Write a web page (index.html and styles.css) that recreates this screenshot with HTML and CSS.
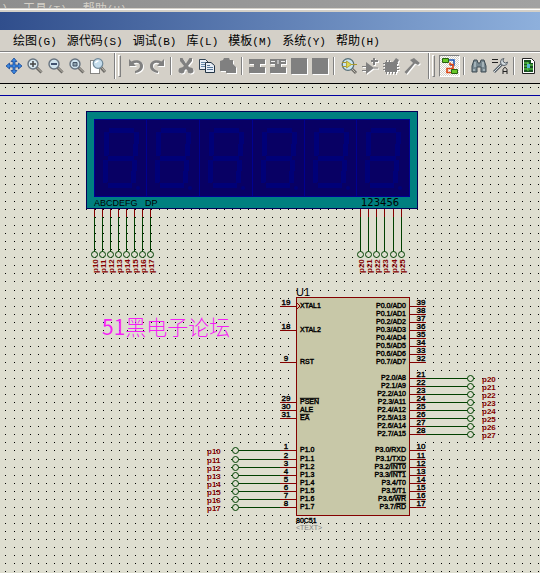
FILE: index.html
```html
<!DOCTYPE html>
<html lang="zh-CN">
  <head>
    <meta charset="UTF-8" />
    <meta name="viewport" content="width=device-width, initial-scale=1.0" />
    <title>51黑电子论坛</title>
    <link rel="stylesheet" href="styles.css">
  </head>
  <body>
    <div class="back-window">
      <span>)</span>
      <span>工具<span class="key">(T)</span></span>
      <span>帮助<span class="key">(H)</span></span>
    </div>

    <div class="window">
      <div class="title-bar"></div>

      <nav class="menu">
        <button>绘图<span class="key">(G)</span></button>
        <button>源代码<span class="key">(S)</span></button>
        <button>调试<span class="key">(B)</span></button>
        <button>库<span class="key">(L)</span></button>
        <button>模板<span class="key">(M)</span></button>
        <button>系统<span class="key">(Y)</span></button>
        <button>帮助<span class="key">(H)</span></button>
      </nav>

      <div class="toolbar">
        <button class="tool" aria-label="Pan">
          <svg viewBox="0 0 16 16"><path d="M8 0l3 3.500H9V7h3.500V5L16 8l-3.500 3V9H9v3.500h2L8 16l-3-3.500h2V9H3.500v2L0 8l3.500-3v2H7V3.500H5z" fill="#3a86e0" stroke="#0c3c8c" stroke-width=".7"/></svg>
        </button>
        <button class="tool" aria-label="Zoom in">
          <svg viewBox="0 0 16 16"><path d="M9.500 9.500l5 5" stroke="#6c6a66" stroke-width="3"/><path d="M10 9.500l4.500 4.500" stroke="#c4c0b4"/><circle cx="6" cy="6" r="5" fill="#d8e8f0" stroke="#687480" stroke-width="1.400"/><path d="M3 6h6M6 3v6" stroke="#444" stroke-width="1.500"/></svg>
        </button>
        <button class="tool" aria-label="Zoom out">
          <svg viewBox="0 0 16 16"><path d="M9.500 9.500l5 5" stroke="#6c6a66" stroke-width="3"/><path d="M10 9.500l4.500 4.500" stroke="#c4c0b4"/><circle cx="6" cy="6" r="5" fill="#d0e4ee" stroke="#687480" stroke-width="1.400"/><path d="M3 6h6" stroke="#124" stroke-width="1.500"/></svg>
        </button>
        <button class="tool" aria-label="Zoom all">
          <svg viewBox="0 0 16 16"><path d="M9.500 9.500l5 5" stroke="#6c6a66" stroke-width="3"/><path d="M10 9.500l4.500 4.500" stroke="#c4c0b4"/><circle cx="6" cy="6" r="5" fill="#d0e4ee" stroke="#687480" stroke-width="1.400"/><path d="M4 4.500h4v3.500H4z" fill="#8ca0ac" stroke="#456"/></svg>
        </button>
        <button class="tool" aria-label="Zoom area">
          <svg viewBox="0 0 16 16"><path d="M.5 2.500h9v13h-9z" fill="#fff" stroke="#222" stroke-dasharray="1 1"/><path d="M11 9.500l4 4.500" stroke="#6c6a66" stroke-width="3"/><path d="M11.500 9.500l3.500 4" stroke="#c4c0b4"/><circle cx="8" cy="5.500" r="4.800" fill="#c4dcec" stroke="#708898" stroke-width="1.200"/><path d="M5.500 5a3 3 0 0 1 3-2" fill="none" stroke="#fff" stroke-width="1.500"/></svg>
        </button>
        <div class="band"></div>
        <div class="grip"></div>
        <button class="tool" disabled aria-label="Undo">
          <svg viewBox="0 0 16 16"><path d="M1 1v7h7L5.600 5.600C8 4 12 4.500 12 8c0 2.500-2 4-5 5v2c5-.5 8-3 8-7 0-5.500-7-7-11.500-4.500z"/></svg>
        </button>
        <button class="tool" disabled aria-label="Redo">
          <svg viewBox="0 0 16 16"><path d="M15 1v7H8l2.400-2.400C8 4 4 4.500 4 8c0 2.500 2 4 5 5v2c-5-.5-8-3-8-7 0-5.500 7-7 11.500-4.500z"/></svg>
        </button>
        <div class="separator"></div>
        <button class="tool" disabled aria-label="Cut">
          <svg viewBox="0 0 16 16"><path d="M2 0h2.500L8 5.500 11.500 0H14v3l-4 5 2 1.500a3 3 0 1 1-2.500 3L8 11l-1.500 1.500a3 3 0 1 1-2.500-3L6 8 2 3z"/></svg>
        </button>
        <button class="tool" aria-label="Copy">
          <svg viewBox="0 0 16 16"><path d="M.5 1.500h6l3 3v7h-9z" fill="#e8eef6" stroke="#345"/><path d="M2 4.500h4M2 6.500h4M2 8.500h4" stroke="#68a"/><path d="M6.500 4.500h5.500l3.500 3v7h-9z" fill="#e8eef6" stroke="#234"/><path d="M8 7.500h3M8 9.500h6M8 11.500h6" stroke="#579"/></svg>
        </button>
        <button class="tool" disabled aria-label="Paste">
          <svg viewBox="0 0 16 16"><path d="M0 3l3-1 1-2h5l1 2h3v4l3 3v6H6v-2H0z"/></svg>
        </button>
        <div class="separator"></div>
        <button class="tool" disabled aria-label="Block copy">
          <svg viewBox="0 0 16 16"><path d="M0 1h16v5h-5v3h5v6H0V9h5V6H0z"/></svg>
        </button>
        <button class="tool" disabled aria-label="Block move">
          <svg viewBox="0 0 16 16"><path d="M0 1h16v5h-5v3h5v6H0V9h5V6H0z"/><path d="M1 3.500h4M11 3.500h4M8 2v4" stroke="#eee"/></svg>
        </button>
        <button class="tool" disabled aria-label="Block rotate">
          <svg viewBox="0 0 16 16"><path d="M0 0h16v16H0z"/></svg>
        </button>
        <button class="tool" disabled aria-label="Block delete">
          <svg viewBox="0 0 16 16"><path d="M0 0h16v16H0z"/></svg>
        </button>
        <div class="separator"></div>
        <button class="tool" aria-label="Pick parts">
          <svg viewBox="0 0 16 16"><path d="M10 10l5 5" stroke="#6c6a66" stroke-width="3"/><path d="M10 10l4.500 4.500" stroke="#c4c0b4"/><circle cx="7" cy="6.500" r="5.800" fill="#c8e4f0" stroke="#587078" stroke-width="1.300"/><path d="M1 4.500h4M1 8.500h4M10 6.500h6" stroke="#a89830"/><path d="M5.500 3v7l5-3.500z" fill="#e0d850" stroke="#a89830" stroke-width=".8"/></svg>
        </button>
        <button class="tool" disabled aria-label="Make device">
          <svg viewBox="0 0 16 16"><path d="M4 4l8 6-8 6v-3H0v-1h4V9H0V8h4zM11 9.500h5v1h-5zM11 0h2v2h3v2h-3v3h-2V4H9V2h2z"/></svg>
        </button>
        <button class="tool" disabled aria-label="Packaging tool">
          <svg viewBox="0 0 16 16"><path d="M2 4h8l3-4 3 2-2 4v8H2z"/><path d="M3.500 2v14M6.500 2v14M9.500 4v12M12.500 4v12M0 5.500h15M0 8.500h16M0 11.500h16" stroke="#808080"/></svg>
        </button>
        <button class="tool" disabled aria-label="Decompose">
          <svg viewBox="0 0 16 16"><path d="M6 2l4-2 6 5-2 2-2-1-1-.5L2.500 16l-2-2L9 5z"/></svg>
        </button>
        <div class="band"></div>
        <div class="grip"></div>
        <button class="tool active" aria-label="Wire autorouter" aria-pressed="true">
          <svg viewBox="0 0 16 16"><path d="M7 2h5v5H8" fill="none" stroke="#1854b8" stroke-width="1.500"/><path d="M8 4.500v2h3v4H5v4h5" fill="none" stroke="#e04818" stroke-width="1.700"/><path d="M.5.500h6v4h-6zM9.500 11.500h6v4h-6z" fill="#68c828" stroke="#286010"/></svg>
        </button>
        <div class="separator"></div>
        <button class="tool" aria-label="Search">
          <svg viewBox="0 0 16 16"><path d="M3 2h3l1 3h2l1-3h3l2 6v6h-5V9H6v5H1V8z" fill="#788890" stroke="#404c54"/><path d="M4 4v5M12 4v5M3 11v2M13 11v2" stroke="#d0dce0"/></svg>
        </button>
        <button class="tool" aria-label="Property assignment">
          <svg viewBox="0 0 16 16"><path d="M0 1.500h6M0 4.500h6" stroke="#222"/><path d="M2 14l8-8" stroke="#586068" stroke-width="3"/><path d="M2 14l8-8" stroke="#d4dce0"/><path d="M12 .5a3.500 3.500 0 1 0 3.500 3.500l-2 1-2-1-.5-2z" fill="#d4dce0" stroke="#586068"/><path d="M11 16v-4.500l1.500-2h1l1.500 2V16M11 13.500h4" fill="none" stroke="#222"/></svg>
        </button>
        <div class="separator"></div>
        <button class="tool" aria-label="New sheet">
          <svg viewBox="0 0 16 16"><path d="M1.500.500h9l3 3v12h-12z" fill="#fff" stroke="#222"/><path d="M3 2h7v3h2v9H3z" fill="#185020"/><path d="M3 5h4v3H3M12 7H8M3 11h4M8 11h4M7 4v9" fill="none" stroke="#68e850"/><path d="M6 6h3v4H6z" fill="#58b8d0"/></svg>
        </button>
      </div>
    </div>

    <main class="workspace">
      <svg class="sheet" xmlns="http://www.w3.org/2000/svg">
        <g transform="translate(0 -84)">
          <path id="grid" class="grid" />
          <path d="M0 95.500H4000" class="border" />

          <!-- 6 digit display -->
          <rect x="86.500" y="111.500" width="331" height="97" class="case" />
          <rect x="94.500" y="119.500" width="315" height="77" class="glass" />
          <g id="digits"></g>
          <text x="94" y="206" class="display-label">ABCDEFG</text>
          <text x="145" y="206" class="display-label">DP</text>
          <text x="361" y="206" class="display-label number">123456</text>

          <!-- U1 -->
          <rect x="296.500" y="297.500" width="113" height="218" class="chip" />
          <path d="M297 303l3 3-3 3" class="clock" />
          <text x="296" y="296" class="ref">U1</text>
          <text x="296" y="523" class="pin-name">80C51</text>
          <text x="296" y="530" class="pin-name hint">&lt;TEXT&gt;</text>

          <g id="wires"></g>
          <text x="102" y="335" class="caption"><tspan class="caption-number">51</tspan>黑电子论坛</text>
        </g>
      </svg>
    </main>

    <script src="script.js"></script>
  </body>
</html>
```

FILE: styles.css
```css
* {
  box-sizing: border-box;
  margin: 0;
  padding: 0;
}

body {
  display: flex;
  flex-direction: column;
  min-height: 100vh;
  background-color: #d4d0c8;
  font-family: "Liberation Sans", "Noto Sans CJK SC", sans-serif;
  overflow-x: hidden;
}

button {
  border: none;
  background: none;
  font-family: inherit;
}

.back-window {
  display: flex;
  gap: 16px;
  height: 8px;
  padding-left: 3px;
  overflow: hidden;
  background: linear-gradient(to right, #8e8e8e, #a2a2a2);
  color: #d4d0c8;
  font-size: 12px;
  line-height: 18px;
}

.window {
  border-top: 1px solid #d4d0c8;
  box-shadow: inset 0 1px 0 #fff;
  padding-top: 3px;
}

.title-bar {
  height: 18px;
  background: linear-gradient(to right, #304e8c, #8eb0dc);
}

.menu {
  display: flex;
  gap: 10px;
  height: 22px;
  padding-left: 13px;
  border-bottom: 1px solid #808080;
}

.menu button {
  color: #000;
  font-size: 12px;
  line-height: 22px;
  white-space: nowrap;
}

.key {
  font-family: "Liberation Mono", monospace;
  font-size: 11px;
}

.toolbar {
  display: flex;
  align-items: center;
  height: 32px;
  padding: 0 0 4px 3px;
  border-top: 1px solid #fff;
  border-bottom: 1px solid #000;
}

.tool {
  display: flex;
  flex: none;
  align-items: center;
  justify-content: center;
  width: 21px;
  height: 22px;
}

.tool svg {
  width: 16px;
  height: 16px;
  overflow: visible;
}

.tool:disabled svg {
  fill: #808080;
  filter: drop-shadow(1px 1px 0 #fff);
}

.tool.active {
  border: 1px solid;
  border-color: #808080 #fff #fff #808080;
  background: repeating-conic-gradient(#fff 0 25%, #d4d0c8 0 50%) 0 0 / 2px 2px;
}

.band,
.separator {
  flex: none;
  width: 2px;
  border-left: 1px solid #808080;
  border-right: 1px solid #fff;
}

.band {
  height: 26px;
  margin: 0 2px 0 6px;
}

.separator {
  height: 18px;
  margin: 0 3px;
}

.grip {
  flex: none;
  width: 3px;
  height: 22px;
  margin-right: 4px;
  border: 1px solid;
  border-color: #fff #808080 #808080 #fff;
}

.workspace {
  flex: 1;
  background-color: #deded0;
  overflow: hidden;
}

/* schematic */
.sheet {
  display: block;
  width: 100%;
  height: 489px;
}

.sheet path,
.sheet rect {
  shape-rendering: crispEdges;
}

.sheet .clock {
  fill: none;
  stroke: #840000;
}

.grid {
  fill: #000;
}

.border {
  stroke: #0000a0;
}

.case {
  fill: #008080;
  stroke: #000058;
}

.glass {
  fill: #080064;
  stroke: #000094;
}

.divider {
  stroke: #000090;
}

.segment {
  fill: none;
  stroke: #000078;
  stroke-width: 5;
}

.point {
  fill: #000078;
}

.chip {
  fill: #c8c8a8;
  stroke: #840000;
}

.pin {
  stroke: #840000;
}

.wire {
  stroke: #004000;
}

.terminal {
  fill: #deded0;
  stroke: #004000;
}

.display-label {
  font-size: 9px;
}

.display-label.number {
  font-family: "DejaVu Sans", sans-serif;
  font-size: 10px;
}

.ref {
  font-size: 11px;
}

.pin-name,
.pin-number {
  font-size: 7px;
  stroke: #000;
  stroke-width: 0.4px;
}

.pin-number {
  font-size: 8px;
  text-anchor: middle;
}

.pin-name.end {
  text-anchor: end;
}

.pin-name.hint {
  fill: #808080;
  stroke: none;
}

.bar {
  text-decoration: overline;
}

.net {
  fill: #840000;
  font-size: 8px;
  font-weight: bold;
}

.caption {
  fill: #f51ef5;
  font-family: "Noto Sans CJK SC", sans-serif;
  font-size: 21px;
  font-weight: 300;
}

.caption-number {
  font-weight: 400;
}
```

FILE: script.js
```js
const wires = document.querySelector('#wires');
const digits = document.querySelector('#digits');
const grid = document.querySelector('#grid');

// Grid positions: 8px steps, some rounded up to 9px
function gridLine(start, end, wide) {
  const line = [];
  for (let p = start; p < end; p += wide.includes(p) ? 9 : 8) {
    line.push(p);
  }
  return line;
}

const columns = gridLine(5, 4000, [5, 86, 207, 384, 457]);
const rows = gridLine(87, 573, [103, 192, 216, 281, 450]);

grid.setAttribute(
  'd',
  rows.map(y => columns.map(x => `M${x} ${y}h1v1h-1z`).join('')).join('')
);

// Unlit display digits
[94, 146, 199, 252, 304, 356].forEach((x, index) => {
  if (index > 0) {
    digits.innerHTML += `<path d="M${x + 0.5} 120V196" class="divider" />`;
  }
  digits.innerHTML += `
    <path d="M${x + 15} 130h25M${x + 14} 158h26M${x + 14} 185h24
      M${x + 13} 132l-1 24M${x + 43} 132l-2 24M${x + 12} 160l-1 23M${x + 41} 160l-2 23" class="segment" />
    <circle cx="${x + 44}" cy="188" r="2" class="point" />`;
});

// Names between ~ signs get a bar above them
function pinName(name) {
  return name.replace(/~(.+)~/, '<tspan class="bar">$1</tspan>');
}

function leftPin(number, name, y, net) {
  wires.innerHTML += `
    <path d="M280 ${y + 0.5}H296" class="pin" />
    <text x="286" y="${y - 1}" class="pin-number">${number}</text>
    <text x="300" y="${y + 2}" class="pin-name">${pinName(name)}</text>`;
  if (net) {
    wires.innerHTML += `
      <path d="M231 ${y + 0.5}H280" class="wire" />
      <circle cx="235.5" cy="${y + 0.5}" r="3" class="terminal" />
      <text x="207" y="${y + 4}" class="net">${net}</text>`;
  }
}

function rightPin(number, name, y, net) {
  wires.innerHTML += `
    <path d="M410 ${y + 0.5}H426" class="pin" />
    <text x="421" y="${y - 1}" class="pin-number">${number}</text>
    <text x="406" y="${y + 2}" class="pin-name end">${pinName(name)}</text>`;
  if (net) {
    wires.innerHTML += `
      <path d="M426 ${y + 0.5}H475" class="wire" />
      <circle cx="470.5" cy="${y + 0.5}" r="3" class="terminal" />
      <text x="482" y="${y + 4}" class="net">${net}</text>`;
  }
}

function displayPin(x, net) {
  wires.innerHTML += `
    <path d="M${x + 0.5} 209V217" class="pin" />
    <path d="M${x + 0.5} 217V252" class="wire" />
    <circle cx="${x + 0.5}" cy="254.5" r="3" class="terminal" />
    <text transform="translate(${x + 4} 273) rotate(-90)" class="net">${net}</text>`;
}

leftPin(19, 'XTAL1', 306);
leftPin(18, 'XTAL2', 330);
leftPin(9, 'RST', 362);
leftPin(29, '~PSEN~', 402);
leftPin(30, 'ALE', 410);
leftPin(31, '~EA~', 418);

const port3 = ['RXD', 'TXD', '~INT0~', '~INT1~', 'T0', 'T1', '~WR~', '~RD~'];
const port3Rows = [450, 459, 467, 475, 483, 491, 499, 507];

for (let i = 0; i < 8; i++) {
  rightPin(39 - i, `P0.${i}/AD${i}`, 306 + i * 8);
  rightPin(21 + i, `P2.${i}/A${8 + i}`, 378 + i * 8, `p2${i}`);
  rightPin(10 + i, `P3.${i}/${port3[i]}`, port3Rows[i]);
  leftPin(1 + i, `P1.${i}`, port3Rows[i], `p1${i}`);
  displayPin(94 + i * 8, `p1${i}`);
}

[360, 368, 376, 384, 393, 401].forEach((x, i) => displayPin(x, `p2${i}`));
```
